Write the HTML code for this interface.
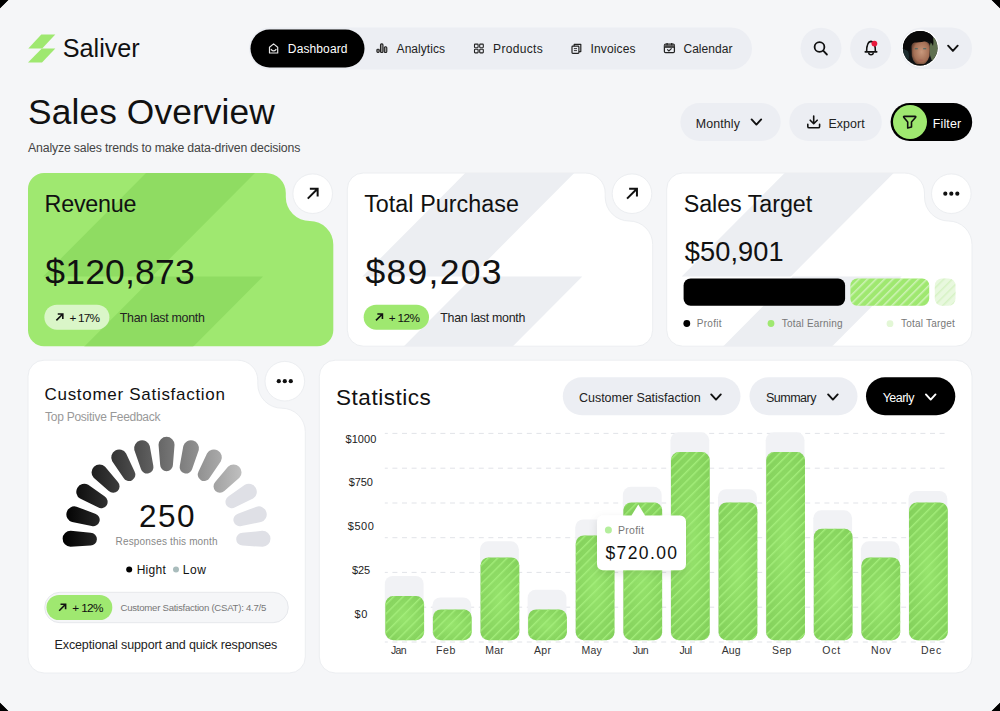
<!DOCTYPE html>
<html><head><meta charset="utf-8"><style>
html,body{margin:0;padding:0;width:1000px;height:711px;overflow:hidden;background:#000;}
#root{position:absolute;left:0;top:0;width:1000px;height:711px;background:#f5f6f8;overflow:hidden;}
svg{position:absolute;left:0;top:0;}
.t{position:absolute;white-space:nowrap;line-height:1;font-family:"Liberation Sans",sans-serif;}
</style></head><body><div id="root">
<svg width="1000" height="711" viewBox="0 0 1000 711">
<defs>
<pattern id="hatch" patternUnits="userSpaceOnUse" width="6.6" height="6.6" patternTransform="rotate(45)"><rect x="0" y="0" width="1.4" height="6.6" fill="#a6f07c" fill-opacity="0.9"/></pattern>
<pattern id="hatch3" patternUnits="userSpaceOnUse" width="6" height="6" patternTransform="rotate(45)"><rect x="0" y="0" width="1.5" height="6" fill="#ffffff" fill-opacity="0.5"/></pattern>
<pattern id="hatch2" patternUnits="userSpaceOnUse" width="6" height="6" patternTransform="rotate(45)"><rect x="0" y="0" width="1.5" height="6" fill="#c9eeb3" fill-opacity="0.6"/></pattern>
<radialGradient id="barglow" cx="0.5" cy="0.5" r="0.7"><stop offset="0" stop-color="#97e46d"/><stop offset="1" stop-color="#82cf5a"/></radialGradient>
<linearGradient id="gauge" gradientUnits="userSpaceOnUse" x1="63" y1="0" x2="246" y2="0"><stop offset="0" stop-color="#000"/><stop offset="1" stop-color="#c4c4c4"/></linearGradient>
<filter id="tipsh" x="-30%" y="-30%" width="160%" height="180%"><feDropShadow dx="0" dy="3" stdDeviation="4" flood-color="#000" flood-opacity="0.10"/></filter>
</defs>
<clipPath id="cl0"><path d="M44,173 H265.8 A20,20 0 0 1 285.8,193 V197 A24,24 0 0 0 309.8,221 H309.8 A23.5,23.5 0 0 1 333.3,244.5 V330.2 A16,16 0 0 1 317.3,346.2 H44 A16,16 0 0 1 28,330.2 V189 A16,16 0 0 1 44,173 Z"/></clipPath>
<path d="M44,173 H265.8 A20,20 0 0 1 285.8,193 V197 A24,24 0 0 0 309.8,221 H309.8 A23.5,23.5 0 0 1 333.3,244.5 V330.2 A16,16 0 0 1 317.3,346.2 H44 A16,16 0 0 1 28,330.2 V189 A16,16 0 0 1 44,173 Z" fill="#9fe870"/>
<g clip-path="url(#cl0)"><polygon points="146.0,173.0 255.0,173.0 152.0,276.5 43.0,276.5" fill="#8fdc62"/><polygon points="154.0,276.5 263.0,276.5 158.0,382.0 49.0,382.0" fill="#8fdc62"/></g>
<clipPath id="cl1"><path d="M363.3,173 H585.2 A20,20 0 0 1 605.2,193 V197 A24,24 0 0 0 629.2,221 H629.2 A23.5,23.5 0 0 1 652.7,244.5 V330.2 A16,16 0 0 1 636.7,346.2 H363.3 A16,16 0 0 1 347.3,330.2 V189 A16,16 0 0 1 363.3,173 Z"/></clipPath>
<path d="M363.3,173 H585.2 A20,20 0 0 1 605.2,193 V197 A24,24 0 0 0 629.2,221 H629.2 A23.5,23.5 0 0 1 652.7,244.5 V330.2 A16,16 0 0 1 636.7,346.2 H363.3 A16,16 0 0 1 347.3,330.2 V189 A16,16 0 0 1 363.3,173 Z" fill="#ffffff" stroke="#eceef1" stroke-width="1"/>
<g clip-path="url(#cl1)"><polygon points="465.3,173.0 574.3,173.0 471.3,276.5 362.3,276.5" fill="#eceef2"/><polygon points="473.3,276.5 582.3,276.5 477.3,382.0 368.3,382.0" fill="#eceef2"/></g>
<clipPath id="cl2"><path d="M682.7,173 H904.5 A20,20 0 0 1 924.5,193 V197 A24,24 0 0 0 948.5,221 H948.5 A23.5,23.5 0 0 1 972,244.5 V330.2 A16,16 0 0 1 956,346.2 H682.7 A16,16 0 0 1 666.7,330.2 V189 A16,16 0 0 1 682.7,173 Z"/></clipPath>
<path d="M682.7,173 H904.5 A20,20 0 0 1 924.5,193 V197 A24,24 0 0 0 948.5,221 H948.5 A23.5,23.5 0 0 1 972,244.5 V330.2 A16,16 0 0 1 956,346.2 H682.7 A16,16 0 0 1 666.7,330.2 V189 A16,16 0 0 1 682.7,173 Z" fill="#ffffff" stroke="#eceef1" stroke-width="1"/>
<g clip-path="url(#cl2)"><polygon points="784.7,173.0 893.7,173.0 790.7,276.5 681.7,276.5" fill="#eceef2"/><polygon points="792.7,276.5 901.7,276.5 796.7,382.0 687.7,382.0" fill="#eceef2"/></g>
<path d="M44,360.2 H237.8 A20,20 0 0 1 257.8,380.2 V384.2 A24,24 0 0 0 281.8,408.2 H281.8 A23.5,23.5 0 0 1 305.3,431.7 V657 A16,16 0 0 1 289.3,673 H44 A16,16 0 0 1 28,657 V376.2 A16,16 0 0 1 44,360.2 Z" fill="#fff" stroke="#eceef1" stroke-width="1"/>
<path d="M335.3,360.2 H956 A16,16 0 0 1 972,376.2 V657 A16,16 0 0 1 956,673 H335.3 A16,16 0 0 1 319.3,657 V376.2 A16,16 0 0 1 335.3,360.2 Z" fill="#fff" stroke="#eceef1" stroke-width="1"/>
<circle cx="312.7" cy="193.7" r="19.8" fill="#fff" stroke="#eceef1" stroke-width="1"/>
<circle cx="632" cy="193.7" r="19.8" fill="#fff" stroke="#eceef1" stroke-width="1"/>
<circle cx="951.3" cy="193.7" r="19.8" fill="#fff" stroke="#eceef1" stroke-width="1"/>
<circle cx="284.8" cy="381.2" r="19.8" fill="#fff" stroke="#eceef1" stroke-width="1"/>
<path d="M307.76,198.64 L317.64,188.76 M309.85,188.76 H317.64 V196.55" fill="none" stroke="#111" stroke-width="2.0" stroke-linecap="butt" stroke-linejoin="miter"/>
<path d="M627.06,198.64 L636.94,188.76 M629.15,188.76 H636.94 V196.55" fill="none" stroke="#111" stroke-width="2.0" stroke-linecap="butt" stroke-linejoin="miter"/>
<circle cx="945.3" cy="193.7" r="2.1" fill="#111"/>
<circle cx="951.3" cy="193.7" r="2.1" fill="#111"/>
<circle cx="957.3" cy="193.7" r="2.1" fill="#111"/>
<circle cx="278.8" cy="381.2" r="2.1" fill="#111"/>
<circle cx="284.8" cy="381.2" r="2.1" fill="#111"/>
<circle cx="290.8" cy="381.2" r="2.1" fill="#111"/>
<rect x="44.4" y="304.7" width="65" height="25" rx="12.5" fill="#ffffff" fill-opacity="0.62"/>
<path d="M56.38,320.42 L62.82,313.98 M57.74,313.98 H62.82 V319.06" fill="none" stroke="#111" stroke-width="1.6" stroke-linecap="butt" stroke-linejoin="miter"/>
<rect x="363.7" y="304.7" width="65.3" height="25" rx="12.5" fill="#9fe870"/>
<path d="M375.98,320.42 L382.42,313.98 M377.34,313.98 H382.42 V319.06" fill="none" stroke="#111" stroke-width="1.6" stroke-linecap="butt" stroke-linejoin="miter"/>
<rect x="683.6" y="278.5" width="161.5" height="27.3" rx="7" fill="#000"/>
<rect x="850.4" y="278.5" width="78.8" height="27.3" rx="7" fill="#9fe870"/>
<rect x="850.4" y="278.5" width="78.8" height="27.3" rx="7" fill="url(#hatch3)"/>
<rect x="934.8" y="278.5" width="20.7" height="27.3" rx="7" fill="#e8f8de"/>
<rect x="934.8" y="278.5" width="20.7" height="27.3" rx="7" fill="url(#hatch2)"/>
<circle cx="686.8" cy="323.5" r="3.4" fill="#000"/>
<circle cx="771" cy="323.5" r="3.4" fill="#9fe870"/>
<circle cx="890" cy="323.7" r="3.4" fill="#e3f7d6"/>
<path d="M90.38,545.61 L70.45,546.79 A8.0,8.0 0 0 1 70.79,530.79 L90.65,532.81 A6.4,6.4 0 0 1 90.38,545.61 Z" fill="url(#gauge)"/>
<path d="M91.68,525.99 L72.11,522.04 A8.0,8.0 0 0 1 76.52,506.66 L95.21,513.69 A6.4,6.4 0 0 1 91.68,525.99 Z" fill="url(#gauge)"/>
<path d="M97.95,507.36 L80.04,498.54 A8.0,8.0 0 0 1 88.23,484.80 L104.50,496.36 A6.4,6.4 0 0 1 97.95,507.36 Z" fill="url(#gauge)"/>
<path d="M108.77,490.94 L93.70,477.84 A8.0,8.0 0 0 1 105.13,466.65 L117.91,481.99 A6.4,6.4 0 0 1 108.77,490.94 Z" fill="url(#gauge)"/>
<path d="M123.42,477.84 L112.20,461.32 A8.0,8.0 0 0 1 126.11,453.42 L134.55,471.51 A6.4,6.4 0 0 1 123.42,477.84 Z" fill="url(#gauge)"/>
<path d="M140.94,468.91 L134.31,450.08 A8.0,8.0 0 0 1 149.77,445.99 L153.31,465.64 A6.4,6.4 0 0 1 140.94,468.91 Z" fill="url(#gauge)"/>
<path d="M160.15,464.75 L158.55,444.85 A8.0,8.0 0 0 1 174.55,444.85 L172.95,464.75 A6.4,6.4 0 0 1 160.15,464.75 Z" fill="url(#gauge)"/>
<path d="M179.79,465.64 L183.33,445.99 A8.0,8.0 0 0 1 198.79,450.08 L192.16,468.91 A6.4,6.4 0 0 1 179.79,465.64 Z" fill="url(#gauge)"/>
<path d="M198.55,471.51 L206.99,453.42 A8.0,8.0 0 0 1 220.90,461.32 L209.68,477.84 A6.4,6.4 0 0 1 198.55,471.51 Z" fill="url(#gauge)"/>
<path d="M215.19,481.99 L227.97,466.65 A8.0,8.0 0 0 1 239.40,477.84 L224.33,490.94 A6.4,6.4 0 0 1 215.19,481.99 Z" fill="url(#gauge)"/>
<path d="M228.60,496.36 L244.87,484.80 A8.0,8.0 0 0 1 253.06,498.54 L235.15,507.36 A6.4,6.4 0 0 1 228.60,496.36 Z" fill="#dfe0e6"/>
<path d="M237.89,513.69 L256.58,506.66 A8.0,8.0 0 0 1 260.99,522.04 L241.42,525.99 A6.4,6.4 0 0 1 237.89,513.69 Z" fill="#dfe0e6"/>
<path d="M242.45,532.81 L262.31,530.79 A8.0,8.0 0 0 1 262.65,546.79 L242.72,545.61 A6.4,6.4 0 0 1 242.45,532.81 Z" fill="#dfe0e6"/>
<circle cx="129.2" cy="569.4" r="3" fill="#000"/>
<circle cx="176" cy="569.4" r="3" fill="#a9bcbc"/>
<rect x="44.7" y="592.3" width="243.6" height="30.4" rx="15.2" fill="#f5f6f8" stroke="#e6e8ec" stroke-width="1"/>
<rect x="46.5" y="594.9" width="65.8" height="25.2" rx="12.6" fill="#9fe870"/>
<path d="M59.18,610.72 L65.62,604.28 M60.54,604.28 H65.62 V609.36" fill="none" stroke="#111" stroke-width="1.6" stroke-linecap="butt" stroke-linejoin="miter"/>
<line x1="384.8" y1="433.4" x2="948" y2="433.4" stroke="#e1e3e8" stroke-width="1" stroke-dasharray="5 4.6" stroke-dashoffset="2"/>
<line x1="384.8" y1="468.2" x2="948" y2="468.2" stroke="#e1e3e8" stroke-width="1" stroke-dasharray="5 4.6" stroke-dashoffset="2"/>
<line x1="384.8" y1="503.0" x2="948" y2="503.0" stroke="#e1e3e8" stroke-width="1" stroke-dasharray="5 4.6" stroke-dashoffset="2"/>
<line x1="384.8" y1="537.7" x2="948" y2="537.7" stroke="#e1e3e8" stroke-width="1" stroke-dasharray="5 4.6" stroke-dashoffset="2"/>
<line x1="384.8" y1="572.4" x2="948" y2="572.4" stroke="#e1e3e8" stroke-width="1" stroke-dasharray="5 4.6" stroke-dashoffset="2"/>
<line x1="384.8" y1="607.2" x2="948" y2="607.2" stroke="#e1e3e8" stroke-width="1" stroke-dasharray="5 4.6" stroke-dashoffset="2"/>
<line x1="384.8" y1="642.0" x2="948" y2="642.0" stroke="#e1e3e8" stroke-width="1" stroke-dasharray="5 4.6" stroke-dashoffset="2"/>
<rect x="384.80" y="575.9" width="38.8" height="64.30" rx="8" fill="#f1f2f5"/>
<rect x="385.30" y="596.1" width="38.8" height="44.10" rx="8" fill="url(#barglow)"/>
<rect x="385.30" y="596.1" width="38.8" height="44.10" rx="8" fill="url(#hatch)"/>
<rect x="432.41" y="597.5" width="38.8" height="42.70" rx="8" fill="#f1f2f5"/>
<rect x="432.91" y="609.5" width="38.8" height="30.70" rx="8" fill="url(#barglow)"/>
<rect x="432.91" y="609.5" width="38.8" height="30.70" rx="8" fill="url(#hatch)"/>
<rect x="480.02" y="541.3" width="38.8" height="98.90" rx="8" fill="#f1f2f5"/>
<rect x="480.52" y="557.5" width="38.8" height="82.70" rx="8" fill="url(#barglow)"/>
<rect x="480.52" y="557.5" width="38.8" height="82.70" rx="8" fill="url(#hatch)"/>
<rect x="527.63" y="589.8" width="38.8" height="50.40" rx="8" fill="#f1f2f5"/>
<rect x="528.13" y="609.5" width="38.8" height="30.70" rx="8" fill="url(#barglow)"/>
<rect x="528.13" y="609.5" width="38.8" height="30.70" rx="8" fill="url(#hatch)"/>
<rect x="575.24" y="519.5" width="38.8" height="120.70" rx="8" fill="#f1f2f5"/>
<rect x="575.74" y="535.5" width="38.8" height="104.70" rx="8" fill="url(#barglow)"/>
<rect x="575.74" y="535.5" width="38.8" height="104.70" rx="8" fill="url(#hatch)"/>
<rect x="622.85" y="486.8" width="38.8" height="153.40" rx="8" fill="#f1f2f5"/>
<rect x="623.35" y="502.4" width="38.8" height="137.80" rx="8" fill="url(#barglow)"/>
<rect x="623.35" y="502.4" width="38.8" height="137.80" rx="8" fill="url(#hatch)"/>
<rect x="670.46" y="432.3" width="38.8" height="207.90" rx="8" fill="#f1f2f5"/>
<rect x="670.96" y="452.1" width="38.8" height="188.10" rx="8" fill="url(#barglow)"/>
<rect x="670.96" y="452.1" width="38.8" height="188.10" rx="8" fill="url(#hatch)"/>
<rect x="718.07" y="489.2" width="38.8" height="151.00" rx="8" fill="#f1f2f5"/>
<rect x="718.57" y="502.4" width="38.8" height="137.80" rx="8" fill="url(#barglow)"/>
<rect x="718.57" y="502.4" width="38.8" height="137.80" rx="8" fill="url(#hatch)"/>
<rect x="765.68" y="432.3" width="38.8" height="207.90" rx="8" fill="#f1f2f5"/>
<rect x="766.18" y="452.1" width="38.8" height="188.10" rx="8" fill="url(#barglow)"/>
<rect x="766.18" y="452.1" width="38.8" height="188.10" rx="8" fill="url(#hatch)"/>
<rect x="813.29" y="510.3" width="38.8" height="129.90" rx="8" fill="#f1f2f5"/>
<rect x="813.79" y="528.8" width="38.8" height="111.40" rx="8" fill="url(#barglow)"/>
<rect x="813.79" y="528.8" width="38.8" height="111.40" rx="8" fill="url(#hatch)"/>
<rect x="860.90" y="541.3" width="38.8" height="98.90" rx="8" fill="#f1f2f5"/>
<rect x="861.40" y="557.5" width="38.8" height="82.70" rx="8" fill="url(#barglow)"/>
<rect x="861.40" y="557.5" width="38.8" height="82.70" rx="8" fill="url(#hatch)"/>
<rect x="908.51" y="491" width="38.8" height="149.20" rx="8" fill="#f1f2f5"/>
<rect x="909.01" y="502.4" width="38.8" height="137.80" rx="8" fill="url(#barglow)"/>
<rect x="909.01" y="502.4" width="38.8" height="137.80" rx="8" fill="url(#hatch)"/>
<g filter="url(#tipsh)"><path d="M603,515.5 H631.5 L638.3,504.6 L645,515.5 H680 A6,6 0 0 1 686,521.5 V564.3 A6,6 0 0 1 680,570.3 H603 A6,6 0 0 1 597,564.3 V521.5 A6,6 0 0 1 603,515.5 Z" fill="#fff"/></g>
<circle cx="608.4" cy="529.9" r="3.5" fill="#b4ee9c"/>
<polygon points="41.3,34.6 55.3,34.6 42.2,48.5 28.3,48.5" fill="#9fe870"/>
<polygon points="41.8,48.5 55.3,48.5 42,62.6 28,62.6" fill="#9fe870"/>
<rect x="249" y="27.5" width="503" height="42" rx="21" fill="#eceef3"/>
<rect x="250.5" y="29.5" width="114" height="38" rx="19" fill="#000"/>
<circle cx="821" cy="48.3" r="20.5" fill="#eceef3"/>
<circle cx="870.6" cy="48.3" r="20.5" fill="#eceef3"/>
<rect x="901" y="27.5" width="71" height="41.5" rx="20.75" fill="#eceef3"/>
<rect x="680.4" y="103" width="100.3" height="38" rx="19" fill="#eceef3"/>
<rect x="789.3" y="103" width="92.5" height="38" rx="19" fill="#eceef3"/>
<rect x="890.6" y="103" width="81.6" height="38" rx="19" fill="#000"/>
<circle cx="910" cy="122" r="17" fill="#9fe870"/>
<rect x="562.8" y="377.2" width="177.7" height="38" rx="19" fill="#eceef3"/>
<rect x="749.5" y="377.2" width="108" height="38" rx="19" fill="#eceef3"/>
<rect x="866" y="377.2" width="89.3" height="38" rx="19" fill="#000"/>
<path d="M948.10,45.70 L952.90,50.90 L957.70,45.70" fill="none" stroke="#111" stroke-width="1.9" stroke-linecap="round" stroke-linejoin="round"/>
<path d="M751.60,119.40 L756.40,124.60 L761.20,119.40" fill="none" stroke="#111" stroke-width="1.9" stroke-linecap="round" stroke-linejoin="round"/>
<path d="M711.20,394.40 L716.00,399.60 L720.80,394.40" fill="none" stroke="#111" stroke-width="1.9" stroke-linecap="round" stroke-linejoin="round"/>
<path d="M828.10,394.40 L832.90,399.60 L837.70,394.40" fill="none" stroke="#111" stroke-width="1.9" stroke-linecap="round" stroke-linejoin="round"/>
<path d="M925.90,394.40 L930.70,399.60 L935.50,394.40" fill="none" stroke="#fff" stroke-width="1.9" stroke-linecap="round" stroke-linejoin="round"/>
<path d="M269.5,47.2 L273.6,43.9 L277.7,47.2 V53 H269.5 Z" fill="none" stroke="#e6e6e6" stroke-width="1.2" stroke-linejoin="round"/>
<path d="M271.2,49.5 Q273.6,52.3 276,49.5" fill="none" stroke="#e6e6e6" stroke-width="1.2" stroke-linecap="round"/>
<rect x="376.9" y="49.2" width="2.3" height="3.3" rx="0.9" fill="#999" stroke="#222" stroke-width="1.1"/>
<rect x="380.5" y="43.9" width="2.5" height="8.6" rx="1" fill="#999" stroke="#222" stroke-width="1.1"/>
<rect x="384.3" y="46.8" width="2.5" height="5.7" rx="1" fill="#999" stroke="#222" stroke-width="1.1"/>
<rect x="474.5" y="44.1" width="3.6" height="3.6" rx="0.6" fill="none" stroke="#222" stroke-width="1.1"/>
<rect x="479.7" y="44.1" width="3.6" height="3.6" rx="0.6" fill="none" stroke="#222" stroke-width="1.1"/>
<rect x="474.5" y="49.3" width="3.6" height="3.6" rx="0.6" fill="none" stroke="#222" stroke-width="1.1"/>
<rect x="479.7" y="49.3" width="3.6" height="3.6" rx="0.6" fill="none" stroke="#222" stroke-width="1.1"/>
<path d="M574.2,46.2 V44.3 H580.8 V51.6 H578.9" fill="none" stroke="#222" stroke-width="1.2" stroke-linejoin="round"/>
<rect x="572" y="46.2" width="6.9" height="7.2" rx="0.8" fill="none" stroke="#222" stroke-width="1.2"/>
<path d="M573.9,48.6 H577 M573.9,50.6 H577" stroke="#222" stroke-width="0.9"/>
<rect x="664.4" y="44.2" width="10" height="8.4" rx="1.2" fill="none" stroke="#222" stroke-width="1.25"/>
<rect x="664.4" y="44.6" width="10" height="2.6" fill="#666"/>
<path d="M664.4,47.2 H674.4 M667.1,42.9 V45.2 M671.7,42.9 V45.2" stroke="#222" stroke-width="1.25"/>
<path d="M667.2,49.3 L668.9,50.9 L671.6,48.3" fill="none" stroke="#222" stroke-width="1.15"/>
<circle cx="819.5" cy="47" r="4.9" fill="none" stroke="#111" stroke-width="1.8"/>
<path d="M823.2,50.7 L826.9,54.5" stroke="#111" stroke-width="1.8" stroke-linecap="round"/>
<path d="M865.3,51.8 H876.7" stroke="#111" stroke-width="1.7" stroke-linecap="round"/>
<path d="M866.6,51.8 C866.6,46.2 867.2,41.6 871,41.4 C874.8,41.6 875.4,46.2 875.4,51.8" fill="none" stroke="#111" stroke-width="1.6"/>
<path d="M868.7,52.4 A2.3,2.3 0 0 0 873.3,52.4" fill="none" stroke="#111" stroke-width="1.5"/>
<circle cx="874.4" cy="43.6" r="2.9" fill="#e8193c"/>
<defs><clipPath id="av"><circle cx="920.2" cy="48.2" r="17.3"/></clipPath><radialGradient id="face" cx="0.5" cy="0.5" r="0.5"><stop offset="0" stop-color="#c99a80"/><stop offset="1" stop-color="#8a5a44"/></radialGradient></defs>
<circle cx="920.2" cy="48.2" r="18.6" fill="#fff"/>
<g clip-path="url(#av)"><rect x="902" y="30" width="37" height="37" fill="#0e1214"/><ellipse cx="936" cy="50" rx="6.5" ry="13" fill="#5f704f"/><ellipse cx="905" cy="56" rx="4" ry="7" fill="#1e2d30"/><defs><radialGradient id="face2" cx="0.55" cy="0.45" r="0.6"><stop offset="0" stop-color="#c8987c"/><stop offset="0.7" stop-color="#a36f55"/><stop offset="1" stop-color="#5a3a2c"/></radialGradient></defs><path d="M911.5,46 Q912,41 920.5,41 Q929.5,41 929.8,46 L929.5,56 Q927,64.5 920.5,65 Q913.5,64.5 911.8,56 Z" fill="url(#face2)"/><path d="M903,48 Q902,31 919,30.5 Q936,30 933,46 Q931,41 927,40.5 Q921,43 914,42.5 Q910,44 910,50 Q907,52 903,48 Z" fill="#0a0a0a"/><path d="M914.8,48.8 H917.8 M923.2,48.8 H926.2" stroke="#3d6a6a" stroke-width="1.1"/><ellipse cx="920.6" cy="60.3" rx="2.6" ry="0.9" fill="#a8675a"/><rect x="902" y="64" width="37" height="4" fill="#15100c"/></g>
<path d="M813.7,116 V123.6 M810.2,120.2 L813.7,123.7 L817.2,120.2 M807.8,124.2 V126.4 Q807.8,127.8 809.2,127.8 H818.2 Q819.6,127.8 819.6,126.4 V124.2" fill="none" stroke="#111" stroke-width="1.6" stroke-linecap="round" stroke-linejoin="round"/>
<path d="M904.4,116.4 H915 Q916.3,116.4 915.5,117.5 L911.5,122 V126.9 L907.7,128 V122 L903.9,117.5 Q903.1,116.4 904.4,116.4 Z" fill="none" stroke="#111" stroke-width="1.6" stroke-linejoin="round"/>
<polygon points="0,0 8.6,0 0,8.6" fill="#000"/>
<line x1="9.299999999999999" y1="0" x2="0" y2="9.299999999999999" stroke="#fff" stroke-width="1" stroke-opacity="0.7"/>
<polygon points="1000,0 991.4,0 1000,8.6" fill="#000"/>
<line x1="990.7" y1="0" x2="1000" y2="9.299999999999999" stroke="#fff" stroke-width="1" stroke-opacity="0.7"/>
<polygon points="0,711 8.6,711 0,702.4" fill="#000"/>
<line x1="9.299999999999999" y1="711" x2="0" y2="701.7" stroke="#fff" stroke-width="1" stroke-opacity="0.7"/>
<polygon points="1000,711 991.4,711 1000,702.4" fill="#000"/>
<line x1="990.7" y1="711" x2="1000" y2="701.7" stroke="#fff" stroke-width="1" stroke-opacity="0.7"/>
<g style="font-family:&quot;Liberation Sans&quot;, sans-serif;white-space:pre">
<text x="62.81" y="57.40" style="font-size:25.2px;letter-spacing:-0.019px;font-weight:400" fill="#111">Saliver</text>
<text x="287.86" y="53.30" style="font-size:12px;letter-spacing:0.113px;font-weight:400" fill="#fff">Dashboard</text>
<text x="396.60" y="53.40" style="font-size:12px;letter-spacing:0.045px;font-weight:400" fill="#222">Analytics</text>
<text x="493.06" y="53.40" style="font-size:12px;letter-spacing:0.337px;font-weight:400" fill="#222">Products</text>
<text x="590.46" y="53.40" style="font-size:12px;letter-spacing:0.156px;font-weight:400" fill="#222">Invoices</text>
<text x="683.44" y="53.40" style="font-size:12px;letter-spacing:0.046px;font-weight:400" fill="#222">Calendar</text>
<text x="28.10" y="124.40" style="font-size:35.3px;letter-spacing:0.112px;font-weight:400" fill="#111">Sales Overview</text>
<text x="28.00" y="152.20" style="font-size:12.3px;letter-spacing:-0.162px;font-weight:400" fill="#444">Analyze sales trends to make data-driven decisions</text>
<text x="695.73" y="128.00" style="font-size:12.4px;letter-spacing:0.142px;font-weight:400" fill="#222">Monthly</text>
<text x="828.43" y="128.00" style="font-size:12.4px;letter-spacing:0.098px;font-weight:400" fill="#222">Export</text>
<text x="932.83" y="128.00" style="font-size:12.4px;letter-spacing:0.135px;font-weight:400" fill="#fff">Filter</text>
<text x="44.58" y="212.30" style="font-size:23.3px;letter-spacing:-0.217px;font-weight:400" fill="#111">Revenue</text>
<text x="364.14" y="212.30" style="font-size:23.3px;letter-spacing:0.053px;font-weight:400" fill="#111">Total Purchase</text>
<text x="683.67" y="212.30" style="font-size:23.3px;letter-spacing:-0.052px;font-weight:400" fill="#111">Sales Target</text>
<text x="45.30" y="284.30" style="font-size:35.5px;letter-spacing:0.196px;font-weight:400" fill="#111">$120,873</text>
<text x="365.40" y="284.10" style="font-size:35.5px;letter-spacing:1.286px;font-weight:400" fill="#111">$89,203</text>
<text x="684.80" y="261.40" style="font-size:27.2px;letter-spacing:0.097px;font-weight:400" fill="#111">$50,901</text>
<text x="69.45" y="322.20" style="font-size:11.8px;letter-spacing:-0.821px;font-weight:400" fill="#111">+ 17%</text>
<text x="388.65" y="322.20" style="font-size:11.8px;letter-spacing:-0.621px;font-weight:400" fill="#111">+ 12%</text>
<text x="119.81" y="322.20" style="font-size:12.4px;letter-spacing:-0.266px;font-weight:400" fill="#222">Than last month</text>
<text x="440.31" y="322.20" style="font-size:12.4px;letter-spacing:-0.266px;font-weight:400" fill="#222">Than last month</text>
<text x="696.82" y="327.30" style="font-size:10px;letter-spacing:0.281px;font-weight:400" fill="#777">Profit</text>
<text x="781.84" y="327.30" style="font-size:10px;letter-spacing:0.196px;font-weight:400" fill="#777">Total Earning</text>
<text x="901.04" y="327.30" style="font-size:10px;letter-spacing:0.203px;font-weight:400" fill="#777">Total Target</text>
<text x="44.50" y="400.30" style="font-size:17px;letter-spacing:0.708px;font-weight:400" fill="#111">Customer Satisfaction</text>
<text x="45.11" y="421.40" style="font-size:12px;letter-spacing:-0.267px;font-weight:400" fill="#999">Top Positive Feedback</text>
<text x="139.12" y="527.20" style="font-size:31.5px;letter-spacing:1.452px;font-weight:400" fill="#111">250</text>
<text x="115.62" y="544.60" style="font-size:10px;letter-spacing:0.158px;font-weight:400" fill="#888">Responses this month</text>
<text x="136.66" y="574.00" style="font-size:12px;letter-spacing:0.271px;font-weight:400" fill="#111">Hight</text>
<text x="182.86" y="574.00" style="font-size:12px;letter-spacing:0.489px;font-weight:400" fill="#111">Low</text>
<text x="72.25" y="612.20" style="font-size:11.8px;letter-spacing:-0.621px;font-weight:400" fill="#111">+ 12%</text>
<text x="120.55" y="611.00" style="font-size:9.6px;letter-spacing:-0.256px;font-weight:400" fill="#777">Customer Satisfaction (CSAT): 4.7/5</text>
<text x="54.62" y="648.80" style="font-size:12.5px;letter-spacing:-0.136px;font-weight:400" fill="#222">Exceptional support and quick responses</text>
<text x="336.10" y="405.40" style="font-size:22.5px;letter-spacing:0.509px;font-weight:400" fill="#111">Statistics</text>
<text x="579.01" y="401.80" style="font-size:12.5px;letter-spacing:-0.029px;font-weight:400" fill="#222">Customer Satisfaction</text>
<text x="765.91" y="401.80" style="font-size:12.5px;letter-spacing:-0.481px;font-weight:400" fill="#222">Summary</text>
<text x="882.70" y="401.80" style="font-size:12.5px;letter-spacing:-0.518px;font-weight:400" fill="#fff">Yearly</text>
<text x="345.50" y="442.60" style="font-size:11px;letter-spacing:0.046px;font-weight:400" fill="#222">$1000</text>
<text x="348.80" y="486.30" style="font-size:11px;letter-spacing:-0.166px;font-weight:400" fill="#222">$750</text>
<text x="347.70" y="529.90" style="font-size:11px;letter-spacing:0.601px;font-weight:400" fill="#222">$500</text>
<text x="351.90" y="574.20" style="font-size:11px;letter-spacing:-0.104px;font-weight:400" fill="#222">$25</text>
<text x="354.40" y="617.80" style="font-size:11px;letter-spacing:0.639px;font-weight:400" fill="#222">$0</text>
<text x="391.04" y="654.40" style="font-size:10.5px;letter-spacing:-0.738px;font-weight:400" fill="#333">Jan</text>
<text x="436.08" y="654.40" style="font-size:10.5px;letter-spacing:0.626px;font-weight:400" fill="#333">Feb</text>
<text x="485.18" y="654.40" style="font-size:10.5px;letter-spacing:0.244px;font-weight:400" fill="#333">Mar</text>
<text x="534.00" y="654.40" style="font-size:10.5px;letter-spacing:0.356px;font-weight:400" fill="#333">Apr</text>
<text x="581.58" y="654.40" style="font-size:10.5px;letter-spacing:0.142px;font-weight:400" fill="#333">May</text>
<text x="632.64" y="654.40" style="font-size:10.5px;letter-spacing:-0.488px;font-weight:400" fill="#333">Jun</text>
<text x="679.44" y="654.40" style="font-size:10.5px;letter-spacing:-0.333px;font-weight:400" fill="#333">Jul</text>
<text x="721.80" y="654.40" style="font-size:10.5px;letter-spacing:0.053px;font-weight:400" fill="#333">Aug</text>
<text x="772.07" y="654.40" style="font-size:10.5px;letter-spacing:0.336px;font-weight:400" fill="#333">Sep</text>
<text x="822.21" y="654.40" style="font-size:10.5px;letter-spacing:0.861px;font-weight:400" fill="#333">Oct</text>
<text x="871.08" y="654.40" style="font-size:10.5px;letter-spacing:0.574px;font-weight:400" fill="#333">Nov</text>
<text x="920.98" y="654.40" style="font-size:10.5px;letter-spacing:0.806px;font-weight:400" fill="#333">Dec</text>
<text x="618.08" y="534.00" style="font-size:10.5px;letter-spacing:0.256px;font-weight:400" fill="#777">Profit</text>
<text x="605.40" y="558.80" style="font-size:17.5px;letter-spacing:1.396px;font-weight:400" fill="#111">$720.00</text>
</g>
</svg>
</div></body></html>
